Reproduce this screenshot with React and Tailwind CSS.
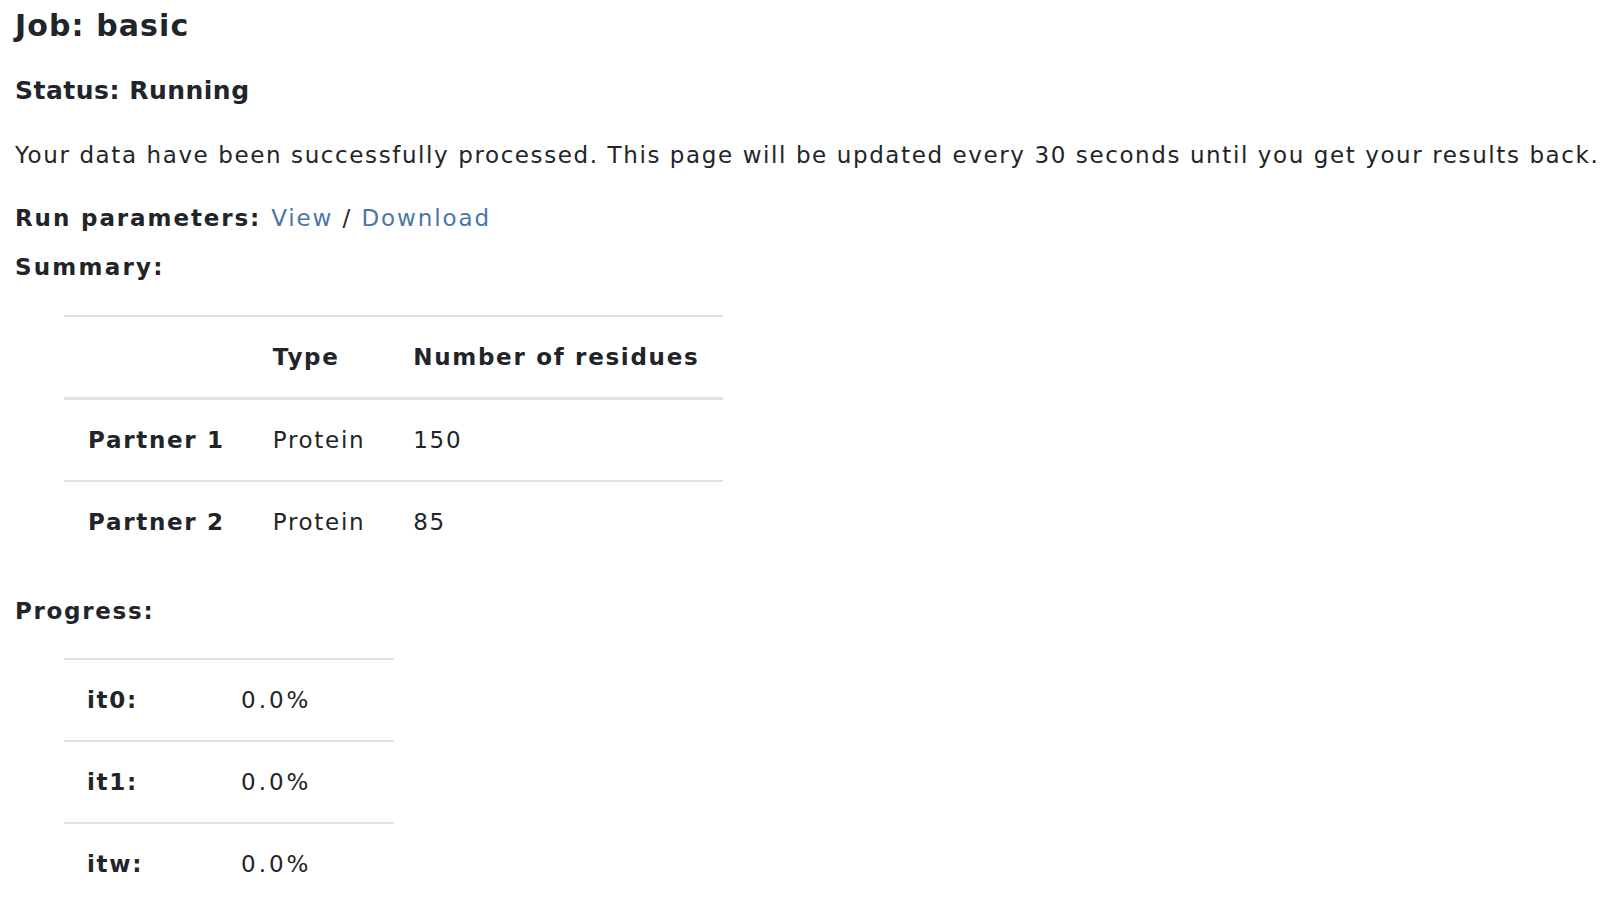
export default function App() {
  return (
    <div className="min-h-screen bg-white text-[#212529] pl-[15px] pt-[8px] font-['DejaVu_Sans',Verdana,sans-serif] text-[23px] leading-[34px] tracking-[1.7px]">
      <h4 className="text-[30px] leading-[36px] font-bold tracking-[1.1px]">Job: basic</h4>
      <h5 className="mt-[32px] text-[25px] leading-[30px] font-bold tracking-[0.5px]">Status: Running</h5>
      <p className="mt-[32px] tracking-[1.6px]">
        Your data have been successfully processed. This page will be updated every 30 seconds until you get your results back.
      </p>
      <div className="mt-[29px] tracking-[1.9px]">
        <span className="font-bold">Run parameters: </span>
        <a href="#" className="text-[#4a76a8]">View</a>
        <span> / </span>
        <a href="#" className="text-[#4a76a8]">Download</a>
      </div>
      <div className="mt-[15px] font-bold tracking-[2.2px]">Summary:</div>

      <table className="mt-[31px] ml-[49px] border-collapse">
        <thead>
          <tr className="border-t-2 border-b-[3px] border-[#dee2e6]">
            <th className="px-[24px] py-[23px]"></th>
            <th className="px-[24px] py-[23px] text-left font-bold">Type</th>
            <th className="px-[24px] py-[23px] text-left font-bold">Number of residues</th>
          </tr>
        </thead>
        <tbody>
          <SummaryRow name="Partner 1" type="Protein" count="150" />
          <SummaryRow name="Partner 2" type="Protein" count="85" border />
        </tbody>
      </table>

      <div className="mt-[32px] font-bold">Progress:</div>

      <table className="mt-[30px] ml-[49px] w-[330px] border-collapse">
        <tbody>
          <ProgressRow label="it0:" value="0.0%" />
          <ProgressRow label="it1:" value="0.0%" />
          <ProgressRow label="itw:" value="0.0%" />
        </tbody>
      </table>
    </div>
  )
}

function SummaryRow({ name, type, count, border }) {
  return (
    <tr className={border ? 'border-t-2 border-[#dee2e6]' : ''}>
      <th className="px-[24px] py-[23px] text-left font-bold">{name}</th>
      <td className="px-[24px] py-[23px]">{type}</td>
      <td className="px-[24px] py-[23px]">{count}</td>
    </tr>
  )
}

function ProgressRow({ label, value }) {
  return (
    <tr className="border-t-2 border-[#dee2e6]">
      <th className="w-[154px] px-[23px] py-[23px] text-left font-bold">{label}</th>
      <td className="px-[23px] py-[23px] tracking-[3px]">{value}</td>
    </tr>
  )
}
